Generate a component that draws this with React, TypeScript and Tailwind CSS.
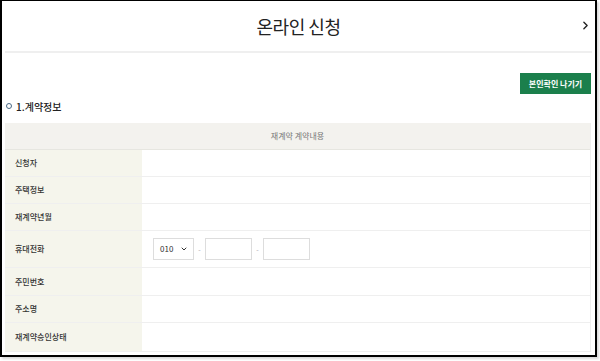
import { ChevronRight, ChevronDown } from "lucide-react";

const rows = [
  { label: "신청자", h: "h-[27px]" },
  { label: "주택정보", h: "h-[27px]" },
  { label: "재계약년월", h: "h-[27px]" },
  { label: "휴대전화", h: "h-[37px]", phone: true },
  { label: "주민번호", h: "h-[28px]" },
  { label: "주소명", h: "h-[27px]" },
  { label: "재계약승인상태", h: "h-[29px]" },
];

export default function App() {
  return (
    <div className="w-[600px] h-[361px] bg-white" style={{ fontFamily: '"Noto Sans CJK KR", "Noto Sans", sans-serif' }}>
      <div className="w-[597px] h-[357px] border-t border-l-2 border-r-2 border-b-2 border-black bg-white shadow-[2px_2px_2px_rgba(0,0,0,0.15)] overflow-hidden">
        {/* header */}
        <div className="relative h-[50px] flex items-center justify-center">
          <h1 className="text-[18px] text-[#222] tracking-tight">온라인 신청</h1>
          <ChevronRight className="absolute right-[3px] top-[18px] w-[13px] h-[13px] text-[#222]" strokeWidth={2.5} />
        </div>
        <div className="mx-[3px] h-[2px] bg-[#efefef]" />

        <div className="pl-[3px] pr-[4px]">
          <div className="flex justify-end pt-[20px]">
            <button className="w-[71px] h-[21px] bg-[#1b7f4c] text-white text-[8px] font-bold">본인확인 나기기</button>
          </div>

          <div className="flex items-center gap-[4px] mt-[2px] h-[20px] pl-[1px]">
            <span className="w-[6px] h-[6px] rounded-full border-[1.5px] border-[#4a6a86]" />
            <span className="text-[10px] font-medium text-[#222]">1.계약정보</span>
          </div>

          <div className="mt-[7px] border-r border-[#eeeeee]">
            <div className="h-[27px] bg-[#f3f2ee] flex items-center justify-center text-[8px] text-[#777] border-b border-[#e6e6e0]">
              재계약 계약내용
            </div>
            {rows.map((r) => (
              <div key={r.label} className={`flex ${r.h} border-b border-[#efefef]`}>
                <div className="w-[137px] bg-[#f5f5ec] flex items-center pl-[10px] text-[8px] font-medium text-[#333]">
                  {r.label}
                </div>
                <div className="flex-1 flex items-center pl-[11px]">
                  {r.phone && (
                    <div className="flex items-center">
                      <div className="w-[41px] h-[22px] border border-[#dddddd] flex items-center justify-between pl-[6px] pr-[5px] text-[8px] text-[#333]">
                        <span>010</span>
                        <ChevronDown className="w-[8px] h-[8px]" strokeWidth={3} />
                      </div>
                      <span className="w-[11px] text-center text-[7px] text-[#aaa]">-</span>
                      <div className="w-[47px] h-[22px] border border-[#dddddd]" />
                      <span className="w-[11px] text-center text-[7px] text-[#aaa]">-</span>
                      <div className="w-[47px] h-[22px] border border-[#dddddd]" />
                    </div>
                  )}
                </div>
              </div>
            ))}
          </div>
        </div>
      </div>
    </div>
  );
}
